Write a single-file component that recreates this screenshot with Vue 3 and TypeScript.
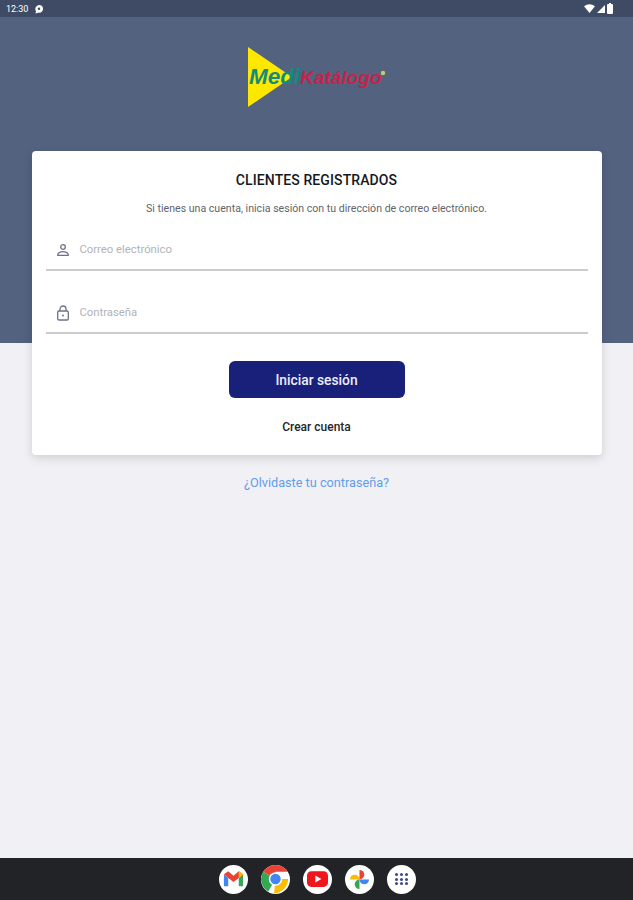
<script setup lang="ts">
const appDots = [0, 1, 2, 3, 4, 5, 6, 7, 8]
</script>

<template>
  <div class="screen">
    <header class="status-bar">
      <div class="status-bar__left">
        <span class="status-bar__time">12:30</span>
        <svg class="status-bar__msg" viewBox="0 0 10 10" width="10" height="10">
          <path d="M5 1a4 4 0 0 1 4 4 3.6 3.6 0 0 1-4 3.6L1.500 9.600 2 7.200A4 4 0 0 1 5 1z" fill="#fff" />
          <circle cx="5" cy="4.800" r="1.200" fill="#3f4b64" />
        </svg>
      </div>
      <div class="status-bar__right">
        <svg viewBox="0 0 11 9" width="11" height="9"><path d="M0 2.200Q5.500-1.800 11 2.200L5.500 9z" fill="#fff" /></svg>
        <svg viewBox="0 0 8 8" width="8" height="8"><path d="M8 0v8H0z" fill="#fff" /></svg>
        <svg viewBox="0 0 6 11" width="6" height="11"><path d="M2 0h2v1h1a1 1 0 0 1 1 1v8a1 1 0 0 1-1 1H1a1 1 0 0 1-1-1V2a1 1 0 0 1 1-1h1z" fill="#fff" /></svg>
      </div>
    </header>

    <main class="main">
      <div class="logo">
        <svg viewBox="0 0 145 62" width="145" height="62">
          <polygon points="1,0 45,30 1,60" fill="#ffe800" />
          <text x="2" y="37" class="logo__text"><tspan fill="#0f8d7d" font-size="22.500">Medi</tspan><tspan fill="#c5234a" font-size="19">Katálogo</tspan></text>
          <circle cx="136" cy="26" r="2.200" fill="#c9c86a" />
        </svg>
      </div>

      <section class="card">
        <h1 class="card__title">CLIENTES REGISTRADOS</h1>
        <p class="card__intro">Si tienes una cuenta, inicia sesión con tu dirección de correo electrónico.</p>

        <div class="field">
          <svg class="field__icon" viewBox="0 0 14 14" width="14" height="14" fill="none" stroke="#6d7286" stroke-width="1.300">
            <circle cx="7" cy="4" r="2.300" />
            <path d="M1.800 12.300v-.9c0-1.700 3.200-2.700 5.200-2.700s5.200 1 5.200 2.700v.9z" />
          </svg>
          <span class="field__placeholder">Correo electrónico</span>
        </div>

        <div class="field field--second">
          <svg class="field__icon" viewBox="0 0 14 16" width="14" height="16" fill="none" stroke="#6d7286" stroke-width="1.300">
            <rect x="1.700" y="6" width="10.600" height="9" rx="1.200" />
            <path d="M4 6V4a3 3 0 0 1 6 0v2" />
            <circle cx="7" cy="10.500" r="1" fill="#6d7286" stroke="none" />
          </svg>
          <span class="field__placeholder">Contraseña</span>
        </div>

        <button class="card__submit" type="button">Iniciar sesión</button>
        <a class="card__create">Crear cuenta</a>
      </section>

      <a class="forgot">¿Olvidaste tu contraseña?</a>
    </main>

    <footer class="nav">
      <span class="nav__app">
        <svg viewBox="0 0 24 24" width="23" height="23">
          <path d="M2 6.500v12.500h4.500V10.500z" fill="#4285f4" />
          <path d="M17.500 10.500V19H22V6.500z" fill="#34a853" />
          <path d="M2 6.500 6.500 3.500 12 8l5.500-4.500L22 6.500l-4.500 4L12 14.500l-5.500-4z" fill="#ea4335" />
          <path d="M17.500 3.500 22 6.500l-4.500 4z" fill="#fbbc04" />
        </svg>
      </span>
      <span class="nav__app nav__app--bare">
        <svg viewBox="0 0 30 30" width="30" height="30">
          <path d="M15 15 2.100 7.500A15 15 0 0 1 28 7.500H15z" fill="#ea4335" />
          <path d="M15 15 7.500 28A15 15 0 0 1 2.100 7.500z" fill="#34a853" />
          <path d="M15 15H28A15 15 0 0 1 13.500 30z" fill="#fbbc04" />
          <circle cx="15" cy="15" r="7" fill="#fff" />
          <circle cx="15" cy="15" r="5.400" fill="#4285f4" />
        </svg>
      </span>
      <span class="nav__app">
        <svg viewBox="0 0 24 18" width="21" height="16">
          <rect width="24" height="18" rx="5" fill="#f0161b" />
          <path d="M9.500 5v8l7-4z" fill="#fff" />
        </svg>
      </span>
      <span class="nav__app">
        <svg viewBox="0 0 24 24" width="23" height="23">
          <path d="M12 12H2a5 5 0 0 1 10 0z" fill="#fbbc04" />
          <path d="M12 12V2a5 5 0 0 1 0 10z" fill="#ea4335" />
          <path d="M12 12h10a5 5 0 0 1-10 0z" fill="#4285f4" />
          <path d="M12 12v10a5 5 0 0 1 0-10z" fill="#34a853" />
        </svg>
      </span>
      <span class="nav__app">
        <span class="nav__dots">
          <i v-for="dot in appDots" :key="dot" class="nav__dot"></i>
        </span>
      </span>
    </footer>
  </div>
</template>

<style>
html,
body {
  margin: 0;
  padding: 0;
}
</style>

<style scoped>
.screen {
  width: 633px;
  height: 900px;
  display: flex;
  flex-direction: column;
  overflow: hidden;
  font-family: Roboto, "Liberation Sans", sans-serif;
}

.status-bar {
  height: 17px;
  flex: none;
  display: flex;
  justify-content: space-between;
  align-items: center;
  padding: 0 20px 0 6px;
  background-color: #3f4b64;
  color: #fff;
}

.status-bar__left,
.status-bar__right {
  display: flex;
  align-items: center;
  gap: 6px;
}

.status-bar__right {
  gap: 2px;
}

.status-bar__time {
  font-size: 9px;
}

.main {
  flex: 1;
  display: flex;
  flex-direction: column;
  align-items: center;
  background: linear-gradient(#53627f 326px, #f0f0f5 326px);
}

.logo {
  height: 62px;
  margin-top: 30px;
  padding-left: 6px;
}

.logo__text {
  font-family: "Liberation Sans", sans-serif;
  font-weight: 700;
  font-style: italic;
}

.card {
  width: 570px;
  height: 304px;
  box-sizing: border-box;
  margin-top: 42px;
  padding: 21px 14px 0;
  display: flex;
  flex-direction: column;
  align-items: center;
  background-color: #fff;
  border-radius: 4px;
  box-shadow: 0 3px 10px rgba(0, 0, 0, 0.14);
}

.card__title {
  margin: 0;
  font-size: 14px;
  line-height: 17px;
  font-weight: 500;
  color: #16181d;
  letter-spacing: 0.1px;
}

.card__intro {
  margin: 14px 0 0;
  font-size: 10.600px;
  line-height: 12px;
  color: #61646b;
}

.field {
  align-self: stretch;
  height: 49px;
  margin-top: 7px;
  box-sizing: border-box;
  padding: 8px 10px 0;
  display: flex;
  align-items: center;
  gap: 10px;
  border-bottom: 2px solid #cbcccf;
}

.field--second {
  margin-top: 14px;
}

.field__icon {
  flex: none;
}

.field__placeholder {
  font-size: 11.300px;
  color: #b1b3b8;
}

.card__submit {
  width: 176px;
  height: 37px;
  margin-top: 27px;
  border: 0;
  border-radius: 6px;
  background-color: #18207a;
  color: #eceef8;
  font-family: inherit;
  font-size: 13.800px;
  font-weight: 500;
}

.card__create {
  margin-top: 22px;
  font-size: 12px;
  line-height: 14px;
  font-weight: 500;
  color: #24262b;
}

.forgot {
  margin-top: 20px;
  font-size: 12.700px;
  line-height: 15px;
  color: #5f9fea;
}

.nav {
  height: 42px;
  flex: none;
  display: flex;
  justify-content: center;
  align-items: center;
  gap: 13px;
  padding-left: 1px;
  background-color: #212327;
}

.nav__app {
  width: 29px;
  height: 29px;
  display: flex;
  justify-content: center;
  align-items: center;
  background-color: #fff;
  border-radius: 50%;
  overflow: hidden;
}

.nav__dots {
  display: grid;
  grid-template-columns: repeat(3, 3px);
  gap: 1.500px 2px;
}

.nav__dot {
  height: 3px;
  border-radius: 50%;
  background-color: #3c4a8e;
}
</style>
